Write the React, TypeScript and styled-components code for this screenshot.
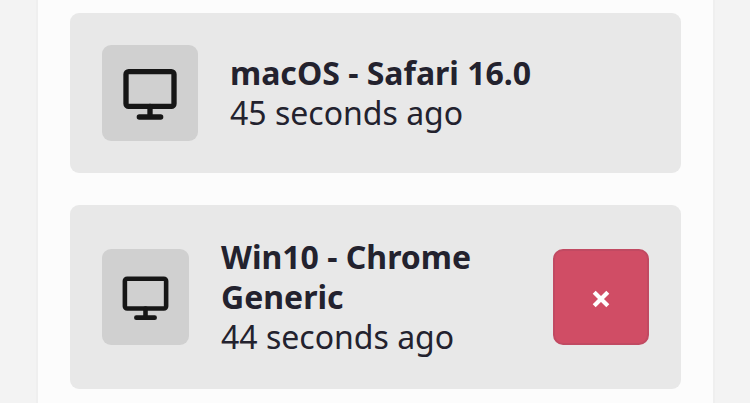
import React from "react";
import styled, { createGlobalStyle } from "styled-components";

const GlobalStyle = createGlobalStyle`
  * { box-sizing: border-box; }
  body {
    margin: 0;
    overflow: hidden;
    background: #f3f3f3;
    color: #23222e;
    font: 400 32px/40px "Noto Sans", sans-serif;
  }
`;

const Panel = styled.main`
  display: flex;
  flex-direction: column;
  gap: 32px;
  width: 679px;
  height: 403px;
  margin-left: 36px;
  padding: 13px 32px 0;
  overflow: hidden;
  background: #fcfcfc;
  border: solid #efefef;
  border-width: 0 2px;
`;

const Card = styled.section`
  display: flex;
  flex-shrink: 0;
  align-items: center;
  gap: 32px;
  padding: 32px;
  border-radius: 9px;
  background: #e8e8e8;
`;

const IconTile = styled.div<{ $width: number }>`
  display: flex;
  flex: 0 0 ${({ $width }) => $width}px;
  height: 96px;
  padding: 16px;
  border-radius: 9px;
  background: #d0d0d0;

  svg {
    width: 100%;
    height: 64px;
  }
`;

const Details = styled.div`
  flex: 1;
  min-width: 0;
`;

const Name = styled.div`
  font-weight: 700;
`;

const Time = styled.div``;

const RemoveButton = styled.button`
  display: flex;
  flex: 0 0 96px;
  align-items: center;
  justify-content: center;
  height: 96px;
  padding: 3px 0 0;
  border: 2px solid #c14a62;
  border-radius: 10px;
  background: #d04d65;
  color: #fff;

  svg {
    width: 20px;
    height: 20px;
  }
`;

const Monitor = () => (
  <svg viewBox="0 0 24 24" fill="none" stroke="#161616" strokeWidth="2" strokeLinecap="round">
    <rect x="3" y="4" width="18" height="13" rx="1" />
    <path d="M12 17v4M8 21h8" />
  </svg>
);

const Cross = () => (
  <svg viewBox="-10 -10 20 20" fill="none" stroke="currentColor" strokeWidth="4.2">
    <path d="M-6.8-6.8 6.8 6.8M-6.8 6.8 6.8-6.8" />
  </svg>
);

const sessions = [
  { name: "macOS - Safari 16.0", time: "45 seconds ago", tile: 96, removable: false },
  { name: "Win10 - Chrome Generic", time: "44 seconds ago", tile: 87, removable: true },
];

export default function App() {
  return (
    <>
      <GlobalStyle />
      <Panel>
        {sessions.map((session) => (
          <Card key={session.name}>
            <IconTile $width={session.tile}>
              <Monitor />
            </IconTile>
            <Details>
              <Name>{session.name}</Name>
              <Time>{session.time}</Time>
            </Details>
            {session.removable && (
              <RemoveButton aria-label="Remove session">
                <Cross />
              </RemoveButton>
            )}
          </Card>
        ))}
      </Panel>
    </>
  );
}
